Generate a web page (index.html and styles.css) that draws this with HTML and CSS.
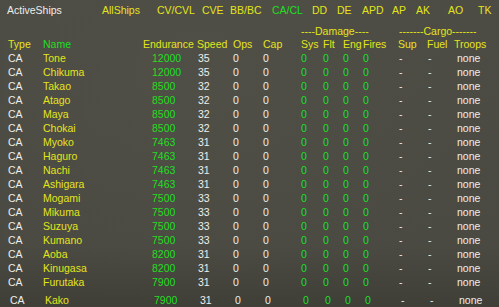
FILE: index.html
```html
<!DOCTYPE html>
<html>
<head>
<meta charset="utf-8">
<link rel="stylesheet" href="styles.css">
</head>
<body>
<div class="panel">
  <div class="nav">
    <span class="w">ActiveShips</span>
    <span class="y">AllShips</span>
    <span class="y">CV/CVL</span>
    <span class="y">CVE</span>
    <span class="y">BB/BC</span>
    <span class="g">CA/CL</span>
    <span class="y">DD</span>
    <span class="y">DE</span>
    <span class="y">APD</span>
    <span class="y">AP</span>
    <span class="y">AK</span>
    <span class="y">AO</span>
    <span class="y">TK</span>
  </div>
  <div class="groups">
    <span class="dmg">----Damage----</span>
    <span class="cargo">-------Cargo-------</span>
  </div>
  <div class="row head">
    <span class="y">Type</span><span class="g">Name</span><span class="y">Endurance</span><span class="y">Speed</span><span class="y">Ops</span><span class="y">Cap</span><span class="y">Sys</span><span class="y">Flt</span><span class="y">Eng</span><span class="y">Fires</span><span class="y">Sup</span><span class="y">Fuel</span><span class="y">Troops</span>
  </div>
  <div id="rows"></div>
</div>
<script src="app.js"></script>
</body>
</html>
```
FILE: app.js
```js
const ships = [
  ["Tone",12000,35],["Chikuma",12000,35],["Takao",8500,32],["Atago",8500,32],
  ["Maya",8500,32],["Chokai",8500,32],["Myoko",7463,31],["Haguro",7463,31],
  ["Nachi",7463,31],["Ashigara",7463,31],["Mogami",7500,33],["Mikuma",7500,33],
  ["Suzuya",7500,33],["Kumano",7500,33],["Aoba",8200,31],["Kinugasa",8200,31],
  ["Furutaka",7900,31],["Kako",7900,31]
];
const box = document.getElementById("rows");
ships.forEach((s, i) => {
  const r = document.createElement("div");
  r.className = "row data" + (i === ships.length - 1 ? " last" : "");
  r.innerHTML =
    '<span class="w">CA</span><span class="y">' + s[0] + '</span>' +
    '<span class="g end">' + s[1] + '</span><span class="w spd">' + s[2] + '</span>' +
    '<span class="w">0</span><span class="w">0</span>' +
    '<span class="g">0</span><span class="g">0</span><span class="g">0</span><span class="g">0</span>' +
    '<span class="w dash">-</span><span class="w dash">-</span><span class="w troops">none</span>';
  box.appendChild(r);
});
```
FILE: styles.css
```css
html, body {
  margin: 0;
  padding: 0;
}
body {
  width: 499px;
  height: 307px;
  overflow: hidden;
  background: #4a4a42;
  font-family: "Liberation Sans", Arial, sans-serif;
  font-size: 10.5px;
}
.panel {
  width: 499px;
  height: 307px;
  box-sizing: border-box;
  padding-left: 8px;
  background:
    radial-gradient(ellipse at 40% 30%, rgba(90,90,80,0.25), rgba(0,0,0,0) 70%),
    linear-gradient(to bottom, #4c4c44 0%, #4a4a42 80%, #3f3f38 100%);
}
.w { color: #eeeeea; }
.y { color: #e4e41c; }
.g { color: #22de22; }

.nav {
  display: grid;
  grid-template-columns: 95px 55px 45px 28px 42px 40px 25px 25px 30px 24px 32px 30px 30px;
  margin-left: -1px;
  padding-top: 3px;
  line-height: 14px;
  white-space: nowrap;
}
.groups {
  position: relative;
  height: 11px;
  margin-top: 9px;
  line-height: 11px;
  color: #e4e41c;
  white-space: nowrap;
}
.groups .dmg { position: absolute; left: 293px; }
.groups .cargo { position: absolute; left: 391px; }

.row {
  display: grid;
  grid-template-columns: 35px 100px 54px 36px 30px 38px 22px 20px 20px 35px 29px 27px 41px;
  line-height: 14px;
  white-space: nowrap;
}
.row .end { padding-left: 9px; }
.row .spd { padding-left: 1px; }
.row .dash { padding-left: 1px; }
.row .troops { padding-left: 3px; }
.row.last {
  margin-top: 4px;
  padding-left: 2px;
}
```
